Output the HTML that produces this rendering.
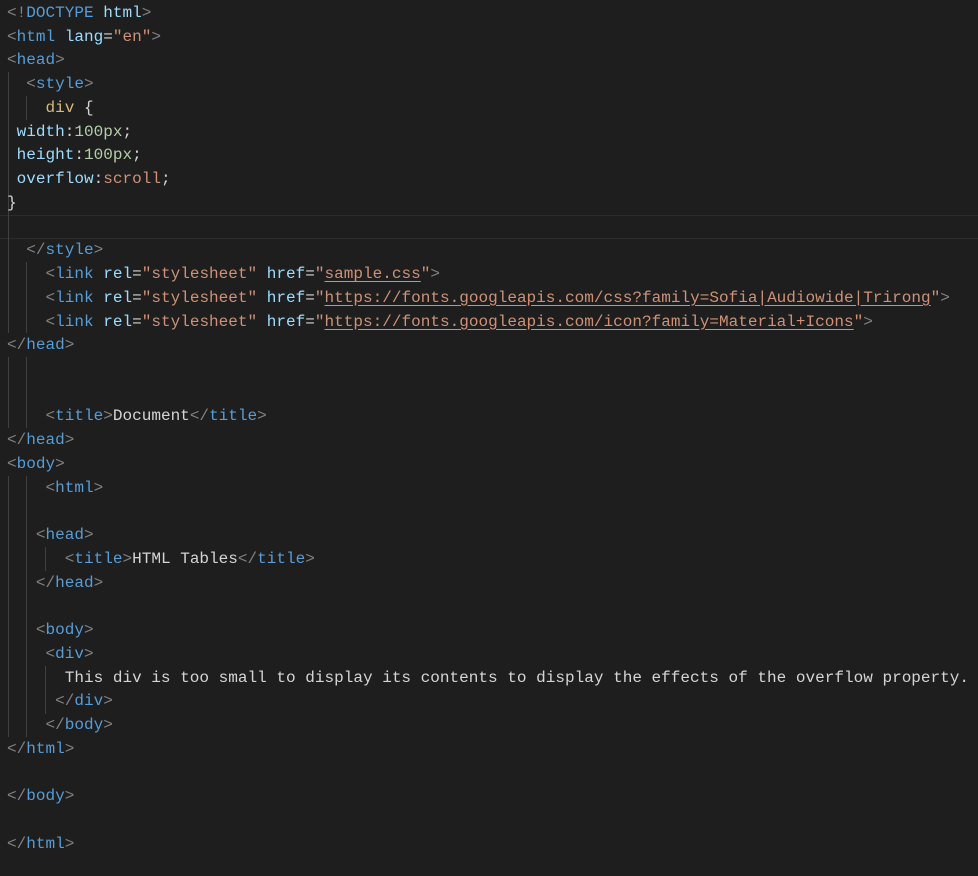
<!DOCTYPE html>
<html><head><style>
body{margin:0;background:#1e1e1e;width:978px;height:876px;overflow:hidden;position:relative}
pre{margin:0;position:absolute;left:7px;top:2px;font-family:"Liberation Mono",monospace;font-size:16.05px;line-height:23.74px;color:#d4d4d4}
.g{position:absolute;width:1px;background:#404040}
.p{color:#808080}.t{color:#569cd6}.a{color:#9cdcfe}.s{color:#ce9178}.n{color:#b5cea8}.c{color:#d7ba7d}
.u{text-decoration:underline;text-decoration-color:#ce9178;text-underline-offset:3px}
.cur{position:absolute;left:0;right:0;top:215px;height:22px;border-top:1px solid #2c2c2c;border-bottom:1px solid #2c2c2c}
</style></head><body>
<div class="cur"></div>
<div class="g" style="left:8px;top:72px;height:261px"></div>
<div class="g" style="left:8px;top:357px;height:71px"></div>
<div class="g" style="left:8px;top:476px;height:261px"></div>
<div class="g" style="left:26px;top:96px;height:24px"></div>
<div class="g" style="left:26px;top:262px;height:71px"></div>
<div class="g" style="left:26px;top:357px;height:71px"></div>
<div class="g" style="left:26px;top:476px;height:261px"></div>
<div class="g" style="left:45px;top:547px;height:24px"></div>
<div class="g" style="left:45px;top:666px;height:48px"></div>
<pre><span class="p">&lt;!</span><span class="t">DOCTYPE</span> <span class="a">html</span><span class="p">&gt;</span>
<span class="p">&lt;</span><span class="t">html</span> <span class="a">lang</span>=<span class="s">"en"</span><span class="p">&gt;</span>
<span class="p">&lt;</span><span class="t">head</span><span class="p">&gt;</span>
  <span class="p">&lt;</span><span class="t">style</span><span class="p">&gt;</span>
    <span class="c">div</span> {
 <span class="a">width</span>:<span class="n">100px</span>;
 <span class="a">height</span>:<span class="n">100px</span>;
 <span class="a">overflow</span>:<span class="s">scroll</span>;
}

  <span class="p">&lt;/</span><span class="t">style</span><span class="p">&gt;</span>
    <span class="p">&lt;</span><span class="t">link</span> <span class="a">rel</span>=<span class="s">"stylesheet"</span> <span class="a">href</span>=<span class="s">"<span class="u">sample.css</span>"</span><span class="p">&gt;</span>
    <span class="p">&lt;</span><span class="t">link</span> <span class="a">rel</span>=<span class="s">"stylesheet"</span> <span class="a">href</span>=<span class="s">"<span class="u">https://fonts.googleapis.com/css?family=Sofia|Audiowide|Trirong</span>"</span><span class="p">&gt;</span>
    <span class="p">&lt;</span><span class="t">link</span> <span class="a">rel</span>=<span class="s">"stylesheet"</span> <span class="a">href</span>=<span class="s">"<span class="u">https://fonts.googleapis.com/icon?family=Material+Icons</span>"</span><span class="p">&gt;</span>
<span class="p">&lt;/</span><span class="t">head</span><span class="p">&gt;</span>


    <span class="p">&lt;</span><span class="t">title</span><span class="p">&gt;</span>Document<span class="p">&lt;/</span><span class="t">title</span><span class="p">&gt;</span>
<span class="p">&lt;/</span><span class="t">head</span><span class="p">&gt;</span>
<span class="p">&lt;</span><span class="t">body</span><span class="p">&gt;</span>
    <span class="p">&lt;</span><span class="t">html</span><span class="p">&gt;</span>

   <span class="p">&lt;</span><span class="t">head</span><span class="p">&gt;</span>
      <span class="p">&lt;</span><span class="t">title</span><span class="p">&gt;</span>HTML Tables<span class="p">&lt;/</span><span class="t">title</span><span class="p">&gt;</span>
   <span class="p">&lt;/</span><span class="t">head</span><span class="p">&gt;</span>

   <span class="p">&lt;</span><span class="t">body</span><span class="p">&gt;</span>
    <span class="p">&lt;</span><span class="t">div</span><span class="p">&gt;</span>
      This div is too small to display its contents to display the effects of the overflow property.
     <span class="p">&lt;/</span><span class="t">div</span><span class="p">&gt;</span>
    <span class="p">&lt;/</span><span class="t">body</span><span class="p">&gt;</span>
<span class="p">&lt;/</span><span class="t">html</span><span class="p">&gt;</span>

<span class="p">&lt;/</span><span class="t">body</span><span class="p">&gt;</span>

<span class="p">&lt;/</span><span class="t">html</span><span class="p">&gt;</span></pre>
</body></html>
